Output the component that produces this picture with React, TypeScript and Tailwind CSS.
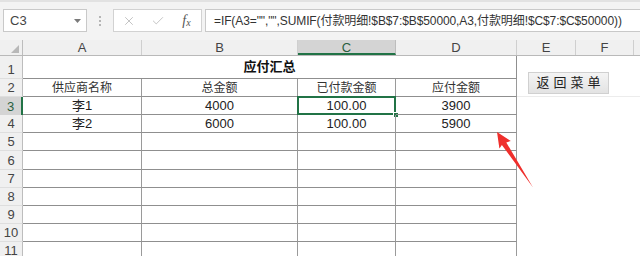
import { X, Check } from 'lucide-react';

const FONT = { fontFamily: '"Liberation Sans", "Noto Sans CJK SC", sans-serif' };

// column widths: row header, A, B, C, D, E, F, rest
const COLS = ['A', 'B', 'C', 'D'];
const W = ['w-[119px]', 'w-[156px]', 'w-[98px]', 'w-[121px]'];

type Row = { n: number; h: string; cells?: string[]; head?: boolean };

const ROWS: Row[] = [
  { n: 2, h: 'h-[18px]', cells: ['供应商名称', '总金额', '已付款金额', '应付金额'], head: true },
  { n: 3, h: 'h-[18px]', cells: ['李1', '4000', '100.00', '3900'] },
  { n: 4, h: 'h-[18px]', cells: ['李2', '6000', '100.00', '5900'] },
  { n: 5, h: 'h-[18px]' },
  { n: 6, h: 'h-[19px]' },
  { n: 7, h: 'h-[18px]' },
  { n: 8, h: 'h-[18px]' },
  { n: 9, h: 'h-[18px]' },
  { n: 10, h: 'h-[18px]' },
  { n: 11, h: 'h-[18px]' },
];

function RowHeader({ n, active }: { n: number; active?: boolean }) {
  return (
    <div className={
      active
        ? 'w-[23px] shrink-0 flex items-end justify-center pb-[0px] bg-[#d4d4d4] border-r-2 border-[#217346] text-[#2b5e3f] text-[13px] leading-[16px]'
        : 'w-[23px] shrink-0 flex items-end justify-center bg-[#f0f0f0] border-r border-b border-r-[#bdbdbd] border-b-[#dedede] text-[#444] text-[13px] leading-[16px]'
    }>
      {n}
    </div>
  );
}

export default function App() {
  return (
    <div className="relative w-[640px] h-[256px] overflow-hidden bg-white text-[#222]" style={FONT}>
      {/* Formula bar */}
      <div className="h-[40px] bg-[#f3f3f3] border-t-[2px] border-[#e2e2e2] flex items-start pt-[7px]">
        <div className="ml-[3px] w-[84px] h-[23px] bg-white border border-[#c9c9c9] flex items-center justify-between pl-[6px] pr-[5px]">
          <span className="text-[13px] text-[#444]">C3</span>
          <svg width="7" height="4" viewBox="0 0 7 4"><path d="M0 0h7L3.5 4z" fill="#7a7a7a" /></svg>
        </div>
        <div className="w-[26px] h-[23px] flex flex-col items-center justify-center gap-[2px]">
          <span className="w-[2px] h-[2px] bg-[#b5b5b5]" />
          <span className="w-[2px] h-[2px] bg-[#b5b5b5]" />
          <span className="w-[2px] h-[2px] bg-[#b5b5b5]" />
        </div>
        <div className="w-[89px] h-[23px] bg-white border border-[#d2d2d2] flex items-center">
          <span className="w-[29px] flex justify-center"><X size={14} strokeWidth={1.5} color="#bcbcbc" /></span>
          <span className="w-[29px] flex justify-center"><Check size={14} strokeWidth={1.5} color="#bcbcbc" /></span>
          <span className="w-[29px] flex justify-center items-end text-[#555] italic" style={{ fontFamily: '"Liberation Serif", serif' }}>
            <span className="text-[14px] leading-none">f</span>
            <span className="text-[10px] leading-none">x</span>
          </span>
        </div>
        <div className="ml-[3px] flex-1 h-[23px] bg-white border border-r-0 border-[#c9c9c9] flex items-center pl-[8px] whitespace-nowrap overflow-hidden">
          <span className="text-[12px] text-[#333] tracking-[-0.1px]">
            =IF(A3="","",SUMIF(付款明细!$B$7:$B$50000,A3,付款明细!$C$7:$C$50000))
          </span>
        </div>
      </div>

      {/* Column headers */}
      <div className="flex h-[16px] bg-[#f0f0f0] border-b border-[#b9b9b9] text-[13px] leading-[15px] text-[#444]">
        <div className="w-[23px] shrink-0 border-r border-[#bdbdbd] relative">
          <svg className="absolute right-[3px] bottom-[2px]" width="8" height="8" viewBox="0 0 8 8"><path d="M8 0V8H0z" fill="#b8b8b8" /></svg>
        </div>
        {COLS.map((c, i) => (
          <div key={c} className={
            c === 'C'
              ? `${W[i]} shrink-0 flex justify-center bg-[#d4d4d4] border-b-2 border-[#217346] border-r border-r-[#bdbdbd] text-[#2b5e3f]`
              : `${W[i]} shrink-0 flex justify-center border-r border-[#cfcfcf]`
          }>{c}</div>
        ))}
        <div className="w-[59px] shrink-0 flex justify-center border-r border-[#cfcfcf]">E</div>
        <div className="w-[58px] shrink-0 flex justify-center border-r border-[#cfcfcf]">F</div>
        <div className="flex-1" />
      </div>

      {/* Row 1: merged title */}
      <div className="flex h-[23px]">
        <RowHeader n={1} />
        <div className="w-[494px] shrink-0 border-b border-r border-[#8f8f8f] flex items-center justify-center text-[13px] font-bold text-[#111]">
          应付汇总
        </div>
        <div className="flex-1" />
      </div>

      {ROWS.map(r => (
        <div key={r.n} className={`flex ${r.h}`}>
          <RowHeader n={r.n} active={r.n === 3} />
          {COLS.map((c, i) => (
            <div key={c} className={`${W[i]} shrink-0 relative border-b border-r border-b-[#8f8f8f] border-r-[#9a9a9a] flex items-center justify-center ${r.head ? 'text-[12px] text-[#333]' : 'text-[13px]'}`}>
              {r.cells?.[i]}
              {r.n === 3 && c === 'C' && (
                <>
                  <div className="absolute -left-[1px] -top-[1px] -right-[1px] -bottom-[1px] border-2 border-[#217346]" />
                  <div className="absolute -right-[4px] -bottom-[4px] w-[6px] h-[6px] bg-[#217346] border border-white" />
                </>
              )}
            </div>
          ))}
          <div className={r.n === 2 ? 'flex-1 border-b border-[#ececec]' : 'flex-1'} />
        </div>
      ))}

      {/* Form button */}
      <div className="absolute left-[528px] top-[72px] w-[81px] h-[22px] bg-gradient-to-b from-[#f4f4f4] to-[#e3e3e3] border border-[#d0d0d0] flex items-center justify-center text-[13px] text-[#222] tracking-[4px] pl-[4px]">
        返回菜单
      </div>

      {/* Red arrow annotation */}
      <svg className="absolute inset-0 pointer-events-none" width="640" height="256" viewBox="0 0 640 256">
        <polygon
          points="497,132 510.8,141 506.3,142.4 533,187.5 501.9,145 499.4,148.4"
          fill="#ef2f2c"
        />
      </svg>
    </div>
  );
}
